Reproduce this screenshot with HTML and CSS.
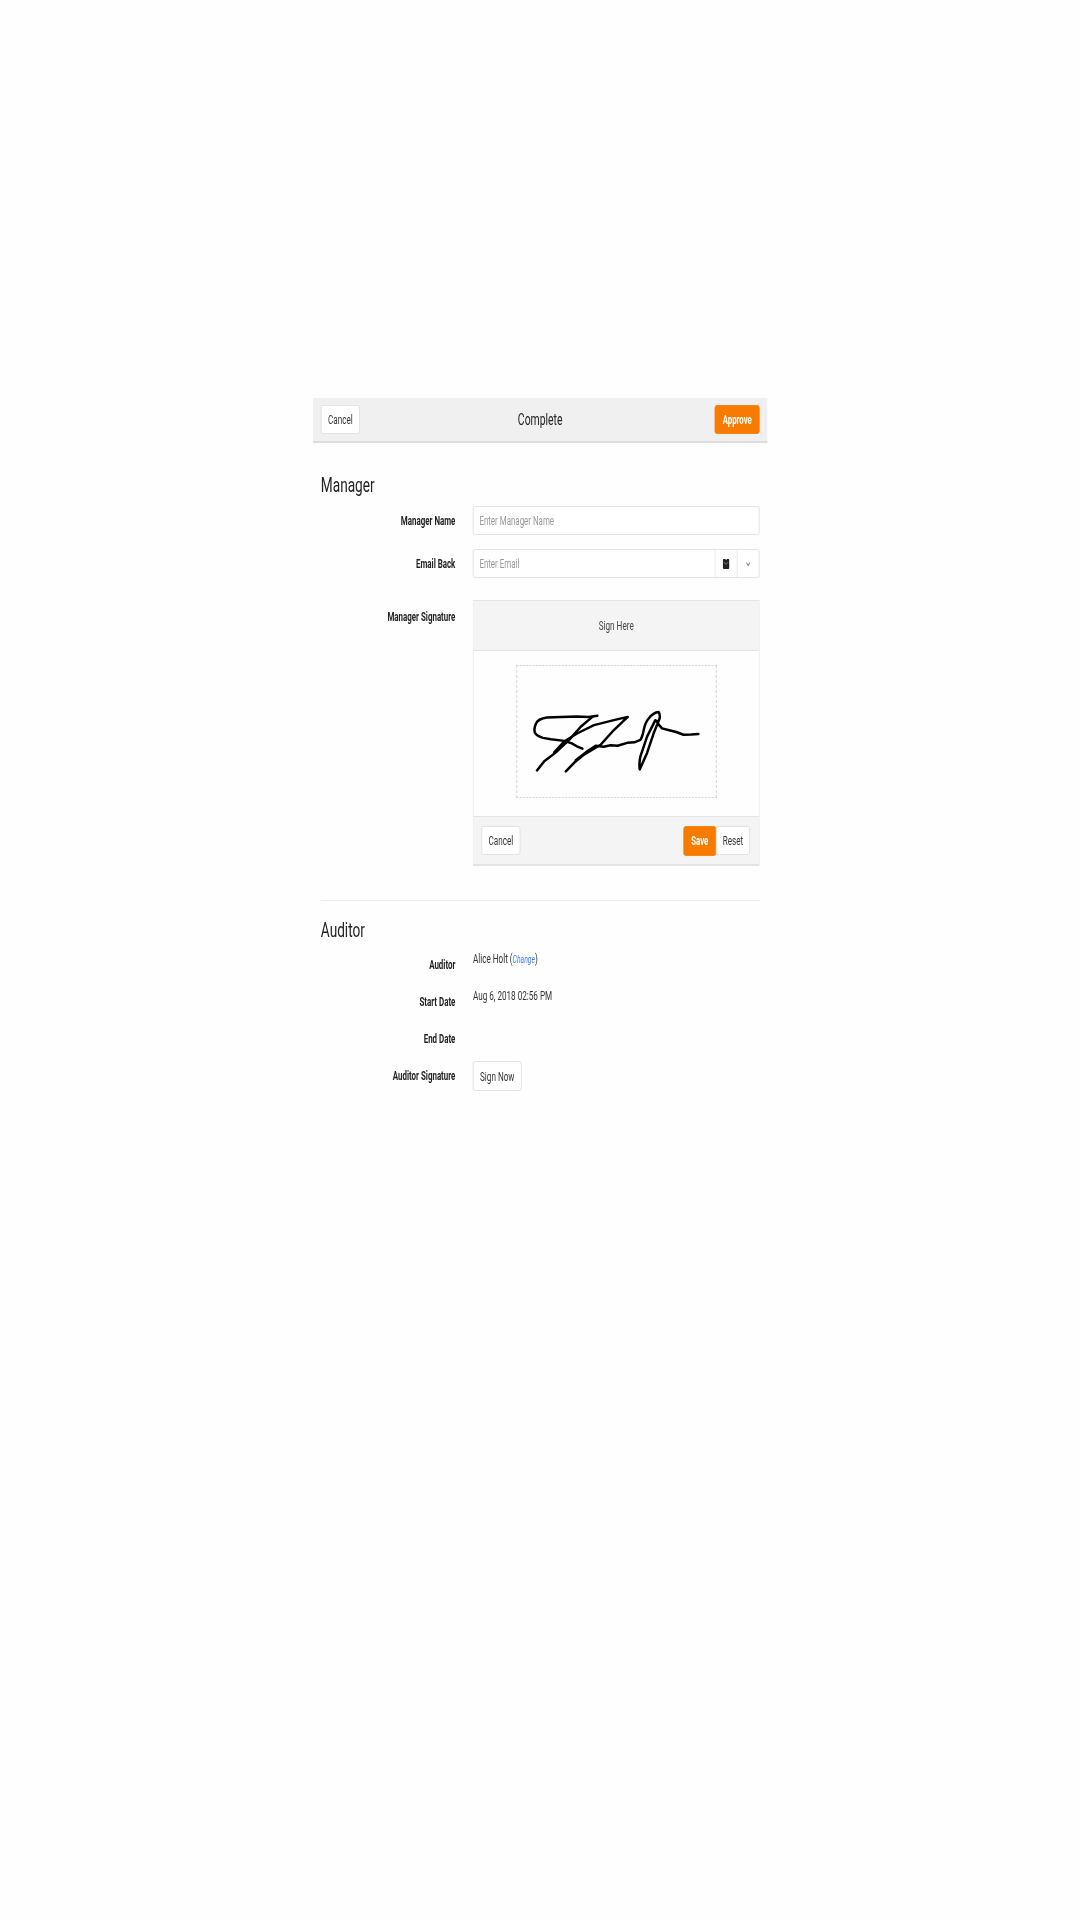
FILE: index.html
```html
<!DOCTYPE html>
<html lang="en">
<head>
  <meta charset="UTF-8">
  <meta name="viewport" content="width=device-width, initial-scale=1.0">
  <title>Complete</title>
  <link rel="stylesheet" href="styles.css">
</head>
<body>
  <div class="sheet">
    <header class="bar">
      <div class="bar-left"><button class="btn">Cancel</button></div>
      <h1 class="bar-title">Complete</h1>
      <div class="bar-right"><button class="btn btn-orange">Approve</button></div>
    </header>

    <main class="content">
      <h2 class="section-title">Manager</h2>

      <div class="form-row">
        <label class="form-label">Manager Name</label>
        <input class="input" type="text" placeholder="Enter Manager Name">
      </div>

      <div class="form-row">
        <label class="form-label">Email Back</label>
        <div class="input-group">
          <input class="input-bare" type="text" placeholder="Enter Email">
          <span class="addon addon-mail">
            <svg class="mail-icon" viewBox="0 0 14 14">
              <path d="M2 0H5L7 1.500L9 0H12Q14 0 14 2V12Q14 14 12 14H2Q0 14 0 12V2Q0 0 2 0Z" fill="#222"/>
              <path d="M2 4L7 7.500L12 4" fill="none" stroke="#aaa" stroke-width="1.100"/>
            </svg>
          </span>
          <span class="addon addon-caret">
            <svg class="caret-icon" viewBox="0 0 10 6">
              <path d="M1 1L5 5L9 1" fill="none" stroke="#777" stroke-width="1.800"/>
            </svg>
          </span>
        </div>
      </div>

      <div class="form-row sig-row">
        <label class="form-label sig-label">Manager Signature</label>
        <div class="sig-panel">
          <div class="sig-head">Sign Here</div>
          <div class="sig-body">
            <div class="sig-box">
              <svg class="sig-drawing" viewBox="0 0 200 133" preserveAspectRatio="none">
                <g fill="none" stroke="#000" stroke-width="2.500" stroke-linecap="round" stroke-linejoin="round">
                  <path d="M80.700 50.500L72 51.800L60 51.300L44 51.800L30 52.300Q21 53.500 19 58.500Q16.500 64 18 68Q20 71.500 26 73L34 74.300L47.300 76L55 78.500L60 81.500L65.700 84"/>
                  <path d="M75.700 51.700L64 61.700L52.300 75L39 87.700L27.300 96.700L20 106"/>
                  <path d="M37.300 87.700L47.300 76.700L60.700 68.300L77.300 60L97.300 55L111.300 51.700L97.300 65L84 80L67.300 90L57.300 98.300L49 107"/>
                  <path d="M59 95.700L71.300 86L79 81L87 82L94 80.500L101 81L110.700 78L118 77.500L124 75Q126 72 127.300 65Q129 57 132.300 53.300Q137 47 142.300 46.700Q144 49 143.300 53.300L137.300 68.300L130.700 88.300L123.300 105Q122.500 98 124 91.700L130.700 71.700L139 55Q141 56 142 59L145.700 63.300L154 65.500L160 67L167.300 69.800L175 69.500L182.300 69"/>
                </g>
              </svg>
            </div>
          </div>
          <div class="sig-foot">
            <button class="btn">Cancel</button>
            <div class="btn-pair">
              <button class="btn btn-orange">Save</button>
              <button class="btn">Reset</button>
            </div>
          </div>
        </div>
      </div>

      <hr class="divider">

      <h2 class="section-title">Auditor</h2>

      <div class="info-rows">
        <div class="info-row">
          <span class="form-label">Auditor</span>
          <span class="info-value">Alice Holt (<a class="change-link" href="#">Change</a>)</span>
        </div>
        <div class="info-row">
          <span class="form-label">Start Date</span>
          <span class="info-value">Aug 6, 2018 02:56 PM</span>
        </div>
        <div class="info-row">
          <span class="form-label">End Date</span>
          <span class="info-value"></span>
        </div>
        <div class="info-row">
          <span class="form-label">Auditor Signature</span>
          <div><button class="btn">Sign Now</button></div>
        </div>
      </div>
    </main>
  </div>
</body>
</html>
```

FILE: styles.css
```css
* {
  margin: 0;
  padding: 0;
  box-sizing: border-box;
  font-family: Roboto, "Liberation Sans", sans-serif;
}

html, body {
  background-color: #fefefe;
  overflow: hidden;
}

body {
  height: 1920px;
  padding-top: 398px;
}

/* the whole form is squeezed horizontally in the reference */
.sheet {
  width: 699px;
  margin-left: 313px;
  color: #333;
  transform: scaleX(0.65);
  transform-origin: left top;
  filter: blur(0.4px);
}

.bar {
  display: grid;
  grid-template-columns: 1fr auto 1fr;
  align-items: center;
  height: 45px;
  padding: 0 12px 0 12px;
  background-color: #f0f0f0;
  border-bottom: 2px solid #ddd;
}

.bar-right {
  text-align: right;
}

.bar-title {
  font-size: 16px;
  font-weight: 400;
  color: #222;
}

.btn {
  height: 29px;
  padding: 0 10px;
  font-size: 12.5px;
  color: #333;
  background-color: #fff;
  border: 1px solid #ddd;
  border-radius: 3px;
}

.btn-orange {
  padding: 0 11px;
  font-size: 12px;
  color: #fff;
  font-weight: 700;
  background-color: #f77b00;
  border-color: #f77b00;
}

.content {
  padding: 27px 12px 0 12px;
}

.section-title {
  font-size: 21px;
  font-weight: 400;
  line-height: 30px;
  color: #222;
}

.form-row {
  display: grid;
  grid-template-columns: 207px 1fr;
  column-gap: 27px;
  align-items: center;
  margin-top: 14px;
}

.section-title + .form-row {
  margin-top: 6px;
}

.form-label {
  font-size: 12.2px;
  font-weight: 700;
  text-align: right;
  color: #222;
}

.input,
.input-group {
  width: 100%;
  height: 29px;
  background-color: #fff;
  border: 1px solid #ddd;
  border-radius: 3px;
}

.input,
.input-bare {
  padding: 0 9px;
  font-size: 12.2px;
  color: #333;
}

.input::placeholder,
.input-bare::placeholder {
  color: #999;
}

.input-group {
  display: flex;
}

.input-bare {
  flex: 1;
  min-width: 0;
  border: none;
  background: none;
}

.addon {
  display: flex;
  justify-content: center;
  align-items: center;
  width: 34px;
  border-left: 1px solid #ddd;
}

.mail-icon {
  width: 11px;
  height: 10px;
}

.caret-icon {
  width: 7px;
  height: 4px;
}

.sig-row {
  align-items: start;
  margin-top: 22px;
}

.sig-label {
  padding-top: 10px;
}

.sig-panel {
  border: 1px solid #e4e4e4;
  border-bottom-width: 2px;
}

.sig-head {
  height: 50px;
  line-height: 49px;
  text-align: center;
  font-size: 12.5px;
  color: #444;
  background-color: #f4f4f4;
  border-bottom: 1px solid #e4e4e4;
}

.sig-body {
  height: 165px;
  padding-top: 14px;
}

.sig-box {
  width: 308px;
  height: 133px;
  margin: 0 auto;
  border: 1px dashed #ccc;
}

.sig-drawing {
  display: block;
  width: 100%;
  height: 100%;
}

.sig-foot {
  display: flex;
  justify-content: space-between;
  align-items: center;
  height: 48px;
  padding: 0 14px 0 12px;
  background-color: #f4f4f4;
  border-top: 1px solid #e4e4e4;
}

.btn-pair {
  display: flex;
  align-items: center;
}

.btn-pair .btn-orange {
  width: 50px;
  height: 30px;
  padding: 0;
}

.btn-pair .btn:last-child {
  width: 52px;
  padding: 0;
}

.divider {
  height: 1px;
  margin: 34px 0 14px 0;
  border: none;
  background-color: #eee;
}

.info-rows {
  display: flex;
  flex-direction: column;
  gap: 7px;
  margin-top: 5px;
}

.info-row {
  display: grid;
  grid-template-columns: 207px 1fr;
  column-gap: 27px;
  align-items: center;
  height: 30px;
}

.info-value {
  align-self: start;
  font-size: 12.5px;
  line-height: 18px;
  color: #333;
}

.change-link {
  font-size: 10.5px;
  font-style: italic;
  color: #3b7ddd;
  text-decoration: none;
}

.info-row .btn {
  height: 30px;
}
```
